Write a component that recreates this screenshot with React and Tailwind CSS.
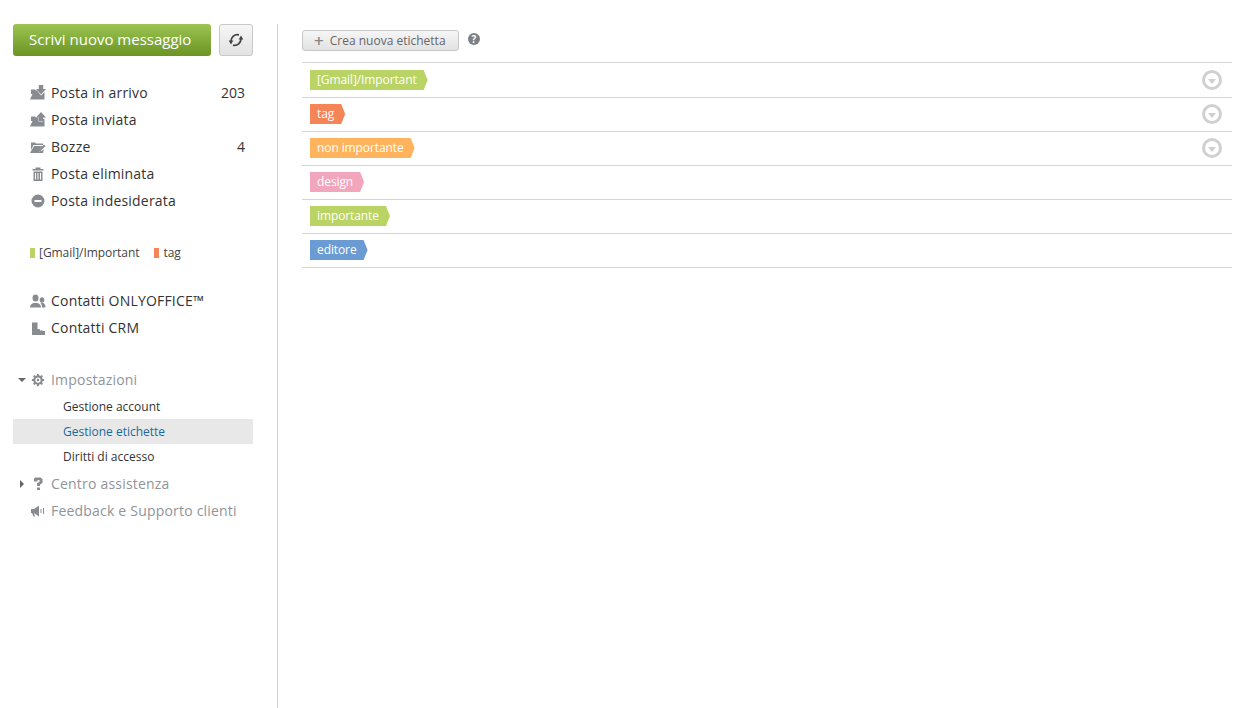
const FONT = "font-['Open_Sans',sans-serif]";

function Icon({ children, className = 'w-4 h-4' }) {
  return (
    <svg viewBox="0 0 16 16" fill="#888c90" className={className}>
      {children}
    </svg>
  );
}

const InboxIcon = () => (
  <Icon>
    <path d="M1 4.500h4l1 1h1L11 10.500l3.500-3.500v7.500H0L2.500 9H1z" />
    <path d="M8.800 0h4.400v4H16l-5 5.500L6 4h2.800z" />
  </Icon>
);
const SentIcon = () => (
  <Icon>
    <path d="M1 4.500h4l1 1h2.500v4H13V7l1.500 0v7.500H0L2.500 9H1z" />
    <path d="M11 0l5 5.500h-2.800v3.500H8.800V5.500H6z" />
  </Icon>
);
const DraftIcon = () => (
  <Icon>
    <path d="M1 3.500h4l1 1h7V6H3.500L1 11z" />
    <path d="M4 7h8.500L10 9.500 9 12.500l3.500-1L14 10l-1 4H0z" />
    <path d="M14 5.500l1.500 1.500-5 5-2 .5.500-2z" />
  </Icon>
);
const TrashIcon = () => (
  <Icon>
    <path d="M2.500 3h11v1.500h-11zM5.500 1.500h5V3h-5z" />
    <path d="M3.500 5.500h9V15h-9zM5 7v6.500h1V7zm2.500 0v6.500h1V7zM10 7v6.500h1V7z" fillRule="evenodd" />
  </Icon>
);
const SpamIcon = () => (
  <Icon>
    <path d="M8 1.500a6.500 6.500 0 1 0 0 13 6.500 6.500 0 0 0 0-13zM4.500 7h7v2h-7z" fillRule="evenodd" />
  </Icon>
);
const PeopleIcon = () => (
  <Icon>
    <ellipse cx="5.500" cy="5" rx="3" ry="3.500" />
    <path d="M0 14.500c0-2.800 1.500-4 4-4.500h3c2.500.5 4 1.700 4 4.500z" />
    <ellipse cx="12" cy="7" rx="2.300" ry="2.800" />
    <path d="M12 14.500c0-2-.5-3.200-1.500-4.200l1-.3h1.500c1.700.5 2.500 2 2.500 4.500z" />
  </Icon>
);
const CrmIcon = () => (
  <Icon>
    <path d="M2 2.500h5.500V9h2l1 2 1-1 1.500 1h2v4H2z" />
  </Icon>
);
const GearIcon = () => (
  <Icon className="w-[14px] h-[14px] ml-[1px]">
    <path
      fillRule="evenodd"
      d="M7 1h2l.4 1.800 1.200.5 1.600-1 1.400 1.400-1 1.600.5 1.200 1.900.5v2l-1.900.4-.5 1.200 1 1.600-1.400 1.400-1.600-1-1.200.5L9 15H7l-.4-1.900-1.200-.5-1.600 1-1.400-1.400 1-1.600-.5-1.200L1 9V7l1.900-.5.5-1.200-1-1.600 1.400-1.400 1.600 1 1.200-.5zM8 5a3 3 0 1 0 0 6 3 3 0 0 0 0-6z"
    />
    <circle cx="8" cy="8" r="1.500" />
  </Icon>
);
const QuestionIcon = () => (
  <Icon>
    <path d="M4 2.500L5.500 1.500h5L12.500 3v4L10 8.500V10H7V7l2.500-1V4h-2v1.500H4z" />
    <path d="M7 11.500h3V14H7z" />
  </Icon>
);
const MegaphoneIcon = () => (
  <Icon>
    <path d="M1 6h3l5-3.500v11L4 10l1 3.500H3.500L2 10H1z" />
    <path d="M10.500 6h1v4h-1zM13 5h1v6h-1z" />
  </Icon>
);
const SyncIcon = () => (
  <svg viewBox="0 0 16 16" className="w-4 h-4" fill="#444">
    <path d="M3 9.500C3 5 6.500 1.800 11 2.800M13 6.500c0 4.500-3.500 7.700-8 6.700" fill="none" stroke="#444" strokeWidth="1.800" />
    <path d="M.7 8.500h4.600L3 12.500zM10.700 7.500h4.600L13 3.500z" />
  </svg>
);

const folders = [
  { label: 'Posta in arrivo', count: '203', icon: <InboxIcon /> },
  { label: 'Posta inviata', icon: <SentIcon /> },
  { label: 'Bozze', count: '4', icon: <DraftIcon /> },
  { label: 'Posta eliminata', icon: <TrashIcon /> },
  { label: 'Posta indesiderata', icon: <SpamIcon /> },
];

const tags = [
  { name: '[Gmail]/Important', color: 'bg-[#b9d365]', menu: true },
  { name: 'tag', color: 'bg-[#f58457]', menu: true },
  { name: 'non importante', color: 'bg-[#ffb35c]', menu: true },
  { name: 'design', color: 'bg-[#f2a6bd]' },
  { name: 'importante', color: 'bg-[#b9d365]' },
  { name: 'editore', color: 'bg-[#6a9bd3]' },
];

function NavRow({ icon, label, count, muted, arrow }) {
  return (
    <div className={`flex items-center h-[27px] text-sm ${muted ? 'text-[#8f9499]' : 'text-[#333]'}`}>
      <span className="w-[17px] flex justify-center">{arrow}</span>
      <span className="w-[21px] flex">{icon}</span>
      <span className="flex-1 tracking-[0.2px]">{label}</span>
      {count && <span className="pr-2">{count}</span>}
    </div>
  );
}

function TagLabel({ name, color }) {
  return (
    <span
      className={`${color} h-5 pl-[7px] pr-[11px] flex items-center text-xs leading-none tracking-[-0.1px] text-white [clip-path:polygon(0_0,calc(100%-4px)_0,100%_50%,calc(100%-4px)_100%,0_100%)]`}
    >
      {name}
    </span>
  );
}

export default function App() {
  return (
    <div className={`${FONT} h-[708px] flex bg-white pl-[13px] pr-2 pt-6 overflow-hidden`}>
      {/* Sidebar */}
      <aside className="w-[240px] shrink-0">
        <div className="flex gap-2">
          <div className="w-[198px] h-8 rounded-[3px] bg-gradient-to-b from-[#9bc453] to-[#6b9420] flex items-center pl-4 pb-px text-[15px] text-white">
            Scrivi nuovo messaggio
          </div>
          <div className="w-[34px] h-8 rounded-[3px] border border-[#c8c8c8] bg-gradient-to-b from-[#f6f6f6] to-[#e2e2e2] flex items-center justify-center">
            <SyncIcon />
          </div>
        </div>

        <div className="mt-[23px]">
          {folders.map((f) => (
            <NavRow key={f.label} {...f} />
          ))}
        </div>

        <div className="mt-[30px] pl-[17px] flex items-center h-[18px] text-xs tracking-[-0.05px] text-[#444]">
          <span className="w-[5px] h-[10px] bg-[#b9d365] mr-1" />
          <span className="mr-[15px]">[Gmail]/Important</span>
          <span className="w-[5px] h-[10px] bg-[#f58457] mr-1" />
          <span>tag</span>
        </div>

        <div className="mt-[25px]">
          <NavRow icon={<PeopleIcon />} label="Contatti ONLYOFFICE™" />
          <NavRow icon={<CrmIcon />} label="Contatti CRM" />
        </div>

        <div className="mt-[25px]">
          <NavRow
            muted
            icon={<GearIcon />}
            label="Impostazioni"
            arrow={<span className="ml-[1px] w-0 h-0 border-x-[4px] border-x-transparent border-t-[4px] border-t-[#666]" />}
          />
          <div className="mt-px mb-px text-xs text-[#333]">
            <div className="h-[25px] pl-[50px] flex items-center">Gestione account</div>
            <div className="h-[25px] pl-[50px] flex items-center bg-[#e8e8e8] text-[#1a6a9e]">Gestione etichette</div>
            <div className="h-[25px] pl-[50px] flex items-center">Diritti di accesso</div>
          </div>
          <NavRow
            muted
            icon={<QuestionIcon />}
            label="Centro assistenza"
            arrow={<span className="ml-[1px] w-0 h-0 border-y-[4px] border-y-transparent border-l-[4px] border-l-[#666]" />}
          />
          <NavRow muted icon={<MegaphoneIcon />} label="Feedback e Supporto clienti" />
        </div>
      </aside>

      <div className="ml-6 w-px bg-[#d0d0d0] shrink-0" />

      {/* Main content */}
      <main className="ml-6 flex-1 pt-[6px]">
        <div className="flex items-center h-[21px]">
          <div className="w-[157px] h-[21px] rounded-[3px] border border-[#c8c8c8] bg-gradient-to-b from-[#f6f6f6] to-[#e2e2e2] flex items-center pl-[11px] text-xs text-[#666]">
            <span className="text-[17px] leading-none font-semibold text-[#888] mr-[6px]">+</span>
            Crea nuova etichetta
          </div>
          <svg viewBox="0 0 12 12" className="w-3 h-3 ml-[9px] -mt-1">
            <circle cx="6" cy="6" r="6" fill="#7d8186" />
            <text x="6" y="9.500" textAnchor="middle" fontSize="10" fontWeight="700" fill="#fff">?</text>
          </svg>
        </div>

        <div className="mt-[11px] border-t border-[#d5d5d5]">
          {tags.map((t, i) => (
            <div
              key={t.name}
              className={`${i === 0 ? 'h-[35px]' : 'h-[34px] pb-px'} border-b border-[#d5d5d5] pl-2 pr-[10px] flex items-center justify-between`}
            >
              <TagLabel name={t.name} color={t.color} />
              {t.menu && (
                <span className="w-5 h-5 rounded-full border-[3px] border-[#d0d0d0] flex items-center justify-center">
                  <span className="w-0 h-0 mt-[2px] border-x-[4px] border-x-transparent border-t-[5px] border-t-[#cfcfcf]" />
                </span>
              )}
            </div>
          ))}
        </div>
      </main>
    </div>
  );
}
